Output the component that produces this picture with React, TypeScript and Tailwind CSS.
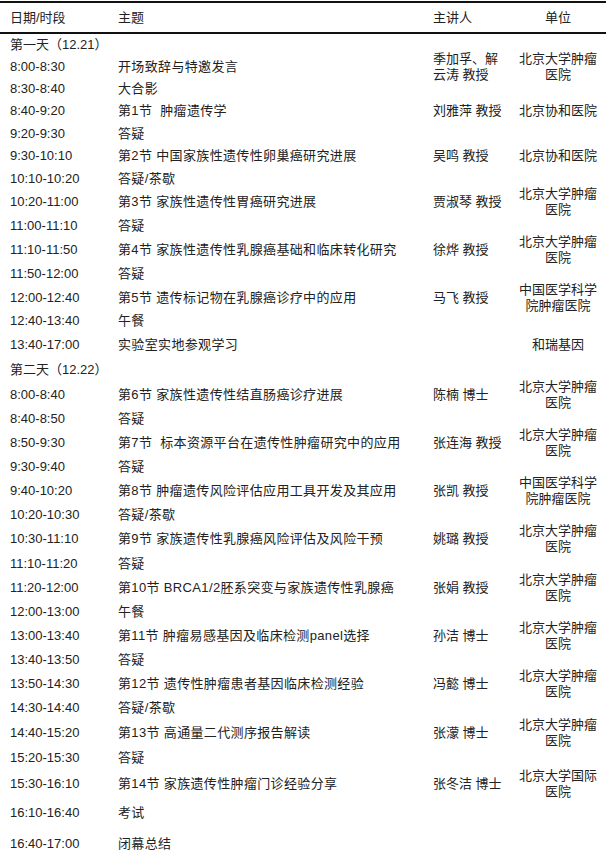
import React from "react";

type Row = {
  h: number;
  day?: string;
  t?: string;
  topic?: string;
  sp?: string[];
  un?: string[];
};

const PKU = ["北京大学肿瘤", "医院"];
const CAMS = ["中国医学科学", "院肿瘤医院"];

const rows: Row[] = [
  { h: 22, day: "第一天（12.21）" },
  { h: 22, t: "8:00-8:30", topic: "开场致辞与特邀发言", sp: ["季加孚、解", "云涛 教授"], un: PKU },
  { h: 22, t: "8:30-8:40", topic: "大合影" },
  { h: 22, t: "8:40-9:20", topic: "第1节  肿瘤遗传学", sp: ["刘雅萍 教授"], un: ["北京协和医院"] },
  { h: 23, t: "9:20-9:30", topic: "答疑" },
  { h: 22, t: "9:30-10:10", topic: "第2节 中国家族性遗传性卵巢癌研究进展", sp: ["吴鸣 教授"], un: ["北京协和医院"] },
  { h: 23, t: "10:10-10:20", topic: "答疑/茶歇" },
  { h: 24, t: "10:20-11:00", topic: "第3节 家族性遗传性胃癌研究进展", sp: ["贾淑琴 教授"], un: PKU },
  { h: 24, t: "11:00-11:10", topic: "答疑" },
  { h: 24, t: "11:10-11:50", topic: "第4节 家族性遗传性乳腺癌基础和临床转化研究", sp: ["徐烨 教授"], un: PKU },
  { h: 24, t: "11:50-12:00", topic: "答疑" },
  { h: 23, t: "12:00-12:40", topic: "第5节 遗传标记物在乳腺癌诊疗中的应用", sp: ["马飞 教授"], un: CAMS },
  { h: 24, t: "12:40-13:40", topic: "午餐" },
  { h: 24, t: "13:40-17:00", topic: "实验室实地参观学习", un: ["和瑞基因"] },
  { h: 26, day: "第二天（12.22）" },
  { h: 24, t: "8:00-8:40", topic: "第6节 家族性遗传性结直肠癌诊疗进展", sp: ["陈楠 博士"], un: PKU },
  { h: 24, t: "8:40-8:50", topic: "答疑" },
  { h: 23, t: "8:50-9:30", topic: "第7节  标本资源平台在遗传性肿瘤研究中的应用", sp: ["张连海 教授"], un: PKU },
  { h: 25, t: "9:30-9:40", topic: "答疑" },
  { h: 24, t: "9:40-10:20", topic: "第8节 肿瘤遗传风险评估应用工具开发及其应用", sp: ["张凯 教授"], un: CAMS },
  { h: 24, t: "10:20-10:30", topic: "答疑/茶歇" },
  { h: 24, t: "10:30-11:10", topic: "第9节 家族遗传性乳腺癌风险评估及风险干预", sp: ["姚璐 教授"], un: PKU },
  { h: 25, t: "11:10-11:20", topic: "答疑" },
  { h: 24, t: "11:20-12:00", topic: "第10节 BRCA1/2胚系突变与家族遗传性乳腺癌", sp: ["张娟 教授"], un: PKU },
  { h: 24, t: "12:00-13:00", topic: "午餐" },
  { h: 24, t: "13:00-13:40", topic: "第11节 肿瘤易感基因及临床检测panel选择", sp: ["孙洁 博士"], un: PKU },
  { h: 24, t: "13:40-13:50", topic: "答疑" },
  { h: 24, t: "13:50-14:30", topic: "第12节 遗传性肿瘤患者基因临床检测经验", sp: ["冯懿 博士"], un: PKU },
  { h: 24, t: "14:30-14:40", topic: "答疑/茶歇" },
  { h: 25, t: "14:40-15:20", topic: "第13节 高通量二代测序报告解读", sp: ["张濛 博士"], un: PKU },
  { h: 25, t: "15:20-15:30", topic: "答疑" },
  { h: 27, t: "15:30-16:10", topic: "第14节 家族遗传性肿瘤门诊经验分享", sp: ["张冬洁 博士"], un: ["北京大学国际", "医院"] },
  { h: 31, t: "16:10-16:40", topic: "考试" },
  { h: 32, t: "16:40-17:00", topic: "闭幕总结" },
];

function Lines({ lines, center }: { lines?: string[]; center?: boolean }) {
  if (!lines) return null;
  return (
    <div className={`flex flex-col leading-[16px] whitespace-nowrap ${center ? "items-center" : "items-start"}`}>
      {lines.map((l) => (
        <span key={l} className="whitespace-pre">{l}</span>
      ))}
    </div>
  );
}

export default function App() {
  return (
    <div
      className="w-[611px] h-[854px] bg-white text-[#222] text-[13px] overflow-hidden"
      style={{ fontFamily: '"Liberation Sans", "Noto Sans CJK SC", sans-serif' }}
    >
      <div className="w-[606px] mt-[1px] border-t-2 border-[#111]">
        {/* header */}
        <div className="flex h-[31px] items-center border-b-2 border-[#111]">
          <div className="w-[118px] pl-[10px] shrink-0">日期/时段</div>
          <div className="w-[315px] shrink-0">主题</div>
          <div className="w-[83px] shrink-0">主讲人</div>
          <div className="w-[84px] shrink-0 text-center">单位</div>
        </div>

        {rows.map((r, i) =>
          r.day ? (
            <div key={i} className="flex items-center pl-[10px] whitespace-nowrap" style={{ height: r.h }}>
              {r.day}
            </div>
          ) : (
            <div key={i} className="flex items-center" style={{ height: r.h }}>
              <div className="w-[118px] shrink-0 pl-[10px] whitespace-nowrap">{r.t}</div>
              <div className="w-[315px] shrink-0 whitespace-pre tracking-[0.35px]">{r.topic}</div>
              <div className="w-[83px] shrink-0 flex items-center">
                <Lines lines={r.sp} />
              </div>
              <div className="w-[84px] shrink-0 flex justify-center">
                <Lines lines={r.un} center />
              </div>
            </div>
          )
        )}
      </div>
    </div>
  );
}
